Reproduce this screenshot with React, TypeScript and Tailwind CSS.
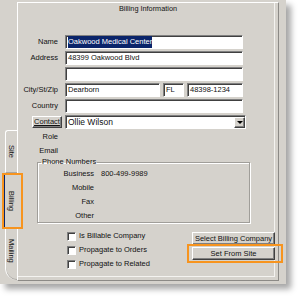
import React from 'react';

const sunken =
  'bg-white border border-t-[#808080] border-l-[#808080] border-b-white border-r-white shadow-[inset_1px_1px_0_#404040]';
const raised =
  'bg-[#d5d2cc] border border-t-white border-l-white border-b-[#404040] border-r-[#404040] shadow-[inset_-1px_-1px_0_#808080]';

function Field({ className = '', children }: { className?: string; children?: React.ReactNode }) {
  return (
    <div className={`h-[14px] flex items-center pl-[2px] text-[7.5px] overflow-hidden whitespace-nowrap ${sunken} ${className}`}>
      {children}
    </div>
  );
}

function Row({ label, children }: { label: string; children: React.ReactNode }) {
  return (
    <div className="h-[14px] flex items-center">
      <div className="w-[40px] text-right text-[7.5px]">{label}</div>
      <div className="ml-[7px] flex gap-[3px]">{children}</div>
    </div>
  );
}

function Check({ label }: { label: string }) {
  return (
    <div className="h-[14px] flex items-center">
      <div className={`w-[9px] h-[9px] ${sunken}`} />
      <span className="ml-[3px] text-[7.5px]">{label}</span>
    </div>
  );
}

function PhoneRow({ label, value }: { label: string; value?: string }) {
  return (
    <div className="h-[14px] flex items-center text-[7.5px] text-[#111]">
      <div className="w-[56px] text-right">{label}</div>
      {value && <div className="ml-[7px]">{value}</div>}
    </div>
  );
}

export default function App() {
  return (
    <div className="w-[303px] h-[301px] bg-white overflow-hidden font-['Liberation_Sans',Arial,sans-serif] text-[#111]">
      <div className="w-[286px] h-[284px] bg-[#d5d2cc] shadow-[5px_5px_6px_rgba(0,0,0,0.35)] flex pt-[2px] pb-[3px] pr-[7px]">
        {/* vertical tabs */}
        <div className="w-[17px] flex flex-col pt-[128px] text-[7.5px]">
          <div className="ml-[5px] w-[12px] h-[43px] border-l border-t border-white rounded-tl-[3px] border-b border-b-[#a8a6a1] flex items-center justify-center">
            <span className="[writing-mode:vertical-rl]">Site</span>
          </div>
          <div className="relative ml-[3px] w-[17px] h-[56px] -mr-[3px] z-10 bg-[#d5d2cc] border-t border-white border-l-2 border-l-[#0a246a] flex items-center justify-center">
            <span className="[writing-mode:vertical-rl] -ml-[3px]">Billing</span>
            <div className="absolute -left-[3px] -top-[1px] w-[21px] h-[56px] border-[2.5px] border-[#f7941e]" />
          </div>
          <div className="ml-[5px] w-[12px] h-[51px] border-l border-white rounded-bl-[12px] shadow-[inset_0_-1px_0_#a8a6a1] flex items-start justify-center pt-[10px]">
            <span className="[writing-mode:vertical-rl]">Mailing</span>
          </div>
        </div>

        {/* tab page */}
        <div className="flex-1 border border-t-white border-l-white border-r-[#8c8a86] border-b-[#8c8a86] shadow-[inset_-3px_-3px_0_#d5d2cc,inset_-4px_-4px_0_#f4f3f0] flex flex-col">
          <div className="h-[12px] leading-[12px] text-center text-[7.3px]">Billing Information</div>

          <div className="mt-[20px] flex flex-col gap-[2px]">
            <Row label="Name">
              <Field className="w-[178px]">
                <span className="bg-[#0a246a] text-white">Oakwood Medical Center</span>
              </Field>
            </Row>
            <Row label="Address">
              <Field className="w-[178px]">48399 Oakwood Blvd</Field>
            </Row>
            <Row label="">
              <Field className="w-[178px]" />
            </Row>
            <Row label="City/St/Zip">
              <Field className="w-[95px]">Dearborn</Field>
              <Field className="w-[21px]">FL</Field>
              <Field className="w-[56px]">48398-1234</Field>
            </Row>
            <Row label="Country">
              <Field className="w-[178px]" />
            </Row>
            <div className="h-[14px] flex items-center">
              <button className={`ml-[14px] w-[30px] h-[12px] flex items-center justify-center text-[7.5px] leading-none underline ${raised}`}>Contact</button>
              <div className={`ml-[3px] w-[181px] h-[14px] flex items-center pl-[2px] text-[8.5px] ${sunken}`}>
                <span className="flex-1">Ollie Wilson</span>
                <div className={`w-[11px] h-[11px] flex items-center justify-center ${raised}`}>
                  <div className="w-0 h-0 border-l-[3px] border-r-[3px] border-t-[3px] border-l-transparent border-r-transparent border-t-black" />
                </div>
              </div>
            </div>
          </div>

          <div className="mt-[1px] h-[14px] flex items-center">
            <div className="w-[40px] text-right text-[7.5px]">Role</div>
          </div>
          <div className="h-[14px] flex items-center">
            <div className="w-[40px] text-right text-[7.5px]">Email</div>
          </div>

          <fieldset className="ml-[19px] w-[213px] h-[65px] border border-[#a09e99] shadow-[1px_1px_0_#fff,inset_1px_1px_0_#fff] text-[#111]">
            <legend className="ml-[3px] px-[1px] text-[7.5px] leading-[8px]">Phone Numbers</legend>
            <div className="pt-[1px]">
              <PhoneRow label="Business" value="800-499-9989" />
              <PhoneRow label="Mobile" />
              <PhoneRow label="Fax" />
              <PhoneRow label="Other" />
            </div>
          </fieldset>

          <div className="mt-[6px] pl-[49px] pr-[3px] flex justify-between">
            <div className="flex flex-col">
              <Check label="Is Billable Company" />
              <Check label="Propagate to Orders" />
              <Check label="Propagate to Related" />
            </div>
            <div className="flex flex-col pt-[3px]">
              <button className={`w-[83px] h-[13px] flex items-center justify-center text-[7.5px] leading-none ${raised}`}>Select Billing Company</button>
              <div className="relative mt-[2px] flex">
                <button className={`w-[83px] h-[13px] flex items-center justify-center text-[7.5px] leading-none ${raised}`}>Set From Site</button>
                <div className="absolute -left-[5px] -right-[8px] -top-[3px] -bottom-[3px] border-[2.5px] border-[#f7941e]" />
              </div>
            </div>
          </div>
        </div>
      </div>
    </div>
  );
}
